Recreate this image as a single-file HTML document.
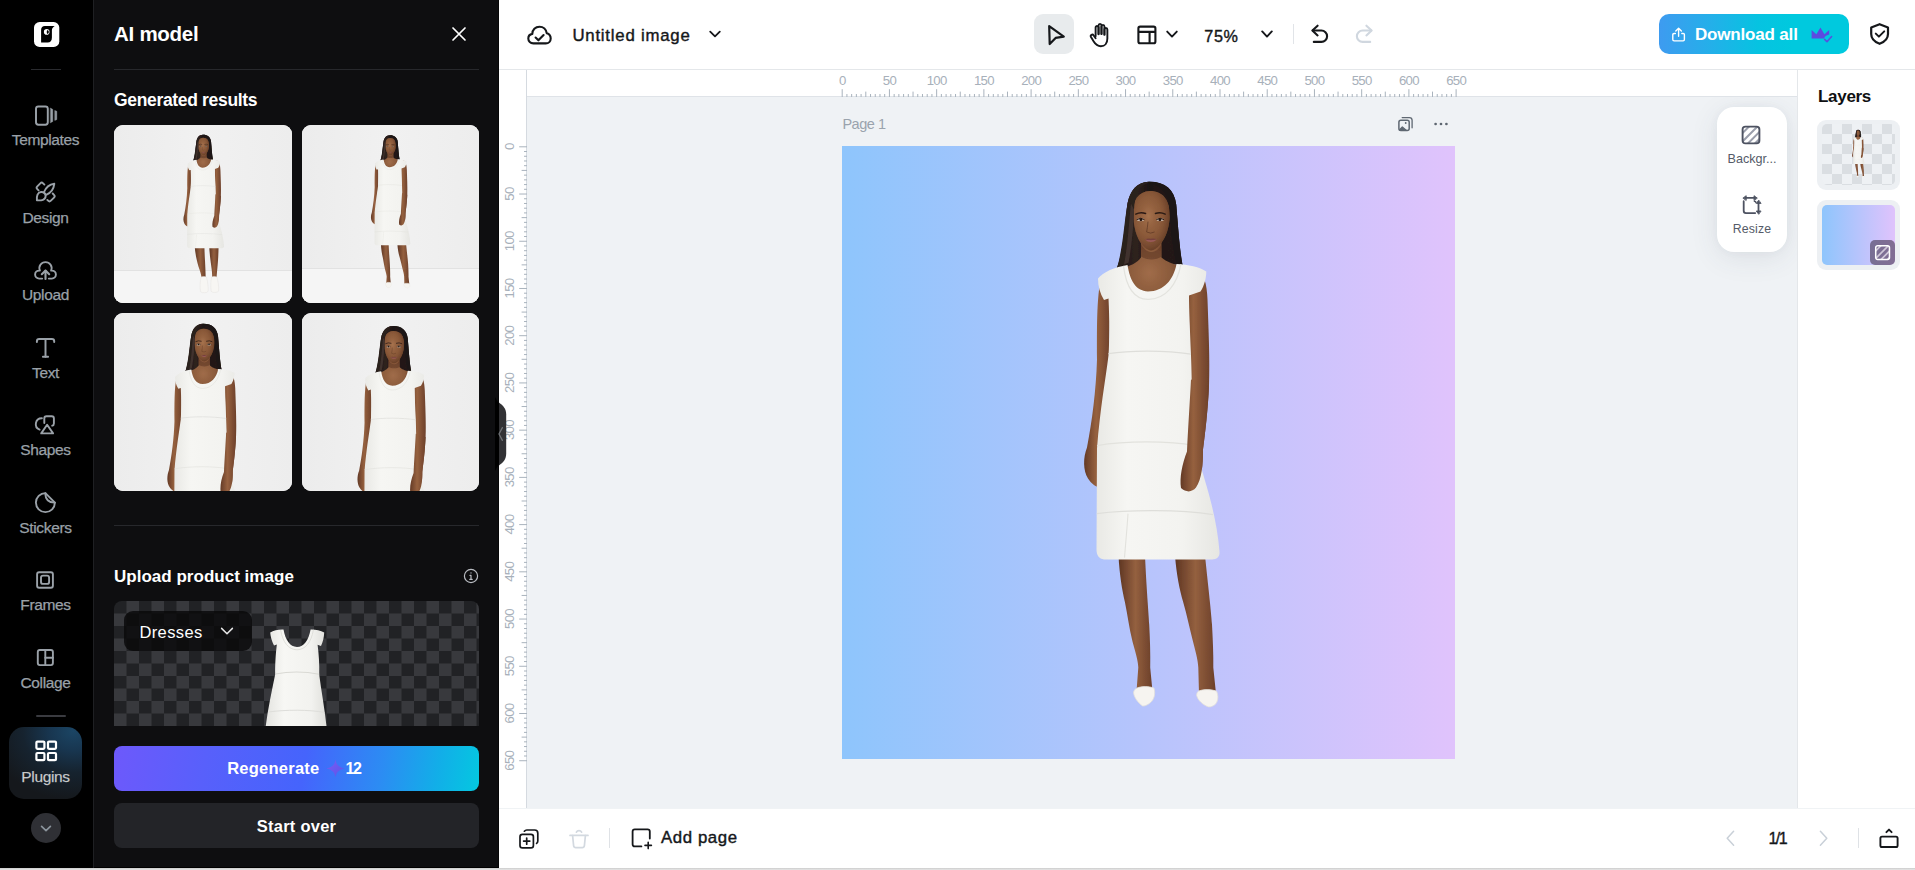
<!DOCTYPE html>
<html lang="en">
<head>
<meta charset="utf-8">
<title>Untitled image</title>
<style>
*{box-sizing:border-box;margin:0;padding:0}
html,body{width:1915px;height:870px;overflow:hidden;background:#fff;font-family:"Liberation Sans",sans-serif;}
body{position:relative}
.abs{position:absolute}
#nav{position:absolute;left:0;top:0;width:94px;height:868px;background:#000;border-right:1px solid #1f2023}
#panel{position:absolute;left:94px;top:0;width:405px;height:868px;background:#0e0e10;border-right:1px solid #070708;border-bottom:1px solid #000}
#top{position:absolute;left:499px;top:0;width:1416px;height:70px;background:#fff;border-bottom:1px solid #e4e7ea}
#stage{position:absolute;left:499px;top:70px;width:1298px;height:738.5px;background:#eff2f5}
#hr{position:absolute;left:499px;top:70px;width:1298px;height:27px;background:#fff;border-bottom:1px solid #dfe3e8}
#vr{position:absolute;left:499px;top:70px;width:28px;height:739px;background:#fff;border-right:1px solid #d5dae0}
#layers{position:absolute;left:1797px;top:70px;width:118px;height:739px;background:#fff;border-left:1px solid #e4e7ea}
#bottom{position:absolute;left:499px;top:809px;width:1416px;height:59px;background:#fff;box-shadow:0 -1px 0 #f0f3f5}
#edge{position:absolute;left:0;top:868px;width:1915px;height:2px;background:linear-gradient(#c6c6c6,#dcdcdc 45%,#e4e4e4)}
.navitem{position:absolute;left:0;width:93px;text-align:center;color:#9aa1a8;font-size:15px;letter-spacing:-0.2px}
.navitem svg{position:absolute;left:50%;transform:translateX(-50%)}
.nl{left:0;width:91px;text-align:center;font-size:15.5px;color:#9aa1a8;letter-spacing:-0.35px;-webkit-text-stroke:0.25px #9aa1a8}
.th{position:absolute;width:177.5px;height:177.5px;border-radius:9px;overflow:hidden;background:#f0f0f0}
.th svg{display:block}
.t{position:absolute;white-space:nowrap;line-height:1}
</style>
</head>
<body>


<svg width="0" height="0" style="position:absolute">
  <defs>
    <linearGradient id="skinL" x1="0" y1="0" x2="1" y2="0"><stop offset="0" stop-color="#643a26"/><stop offset="0.45" stop-color="#96613f"/><stop offset="1" stop-color="#6d402a"/></linearGradient>
    <linearGradient id="legG" x1="0" y1="0" x2="1" y2="0"><stop offset="0" stop-color="#5e3623"/><stop offset="0.5" stop-color="#94603f"/><stop offset="1" stop-color="#6b3f29"/></linearGradient>
    <linearGradient id="dressG" x1="0" y1="0" x2="1" y2="0"><stop offset="0" stop-color="#e9e9e5"/><stop offset="0.25" stop-color="#f6f6f3"/><stop offset="0.7" stop-color="#f3f3f0"/><stop offset="1" stop-color="#e6e6e2"/></linearGradient>
    <linearGradient id="hairG" x1="0" y1="0" x2="1" y2="0"><stop offset="0" stop-color="#1d1513"/><stop offset="0.3" stop-color="#3a2a26"/><stop offset="0.5" stop-color="#1a1210"/><stop offset="0.75" stop-color="#35262243"/><stop offset="1" stop-color="#1d1513"/></linearGradient>
    <radialGradient id="faceG" cx="0.42" cy="0.42" r="0.62"><stop offset="0" stop-color="#a8744f" stop-opacity="0.95"/><stop offset="0.55" stop-color="#8d5b3a" stop-opacity="0.5"/><stop offset="1" stop-color="#5a3421" stop-opacity="0.85"/></radialGradient>
    <radialGradient id="chestG" cx="0.45" cy="0.55" r="0.6"><stop offset="0" stop-color="#a06c49"/><stop offset="0.6" stop-color="#8a5a3b"/><stop offset="1" stop-color="#6e412a"/></radialGradient>
    <g id="figpre">
      <!-- hair back -->
      <path d="M1149 182.2 C1137 182.4 1130 191 1127.5 204 C1125 222 1124 244 1119.6 260 C1118.8 264 1117.6 267 1116.4 269.4 L1130 267 L1175 265 L1182.6 265.8 C1179.6 250 1178 226 1176.2 205 C1174.4 190 1165 182 1149 182.2 Z" fill="#1f1614"/>
      <path d="M1149 182.2 C1137 182.4 1130 191 1127.5 204 C1125 222 1124 244 1119.6 260 C1118.8 264 1117.6 267 1116.4 269.4 L1130 267 L1175 265 L1182.6 265.8 C1179.6 250 1178 226 1176.2 205 C1174.4 190 1165 182 1149 182.2 Z" fill="url(#hairG)" opacity="0.6"/>
      <!-- neck and chest -->
      <path d="M1141 238 L1141 258 C1137 263.5 1130 266.5 1122 269 L1128 302 L1178 302 L1183 267 C1175 265 1166 262.5 1161.5 258 L1161.5 238 Z" fill="url(#chestG)"/>
      <path d="M1141 245 C1147 255 1156 255 1161.5 245 L1161.5 257 C1156 261 1147 261 1141 257 Z" fill="#55301f" opacity="0.5"/>
      <!-- face -->
      <path d="M1133.2 214 C1132.8 201 1138 192 1150 191.5 C1163 191.5 1170 201 1169.7 216 C1169.4 228 1166 238 1160 245 C1157 248.6 1154 250.8 1151 250.8 C1148 250.8 1145 248.6 1142 245 C1136.5 238 1133.6 228 1133.2 214 Z" fill="#8a5939"/>
      <path d="M1133.2 214 C1132.8 201 1138 192 1150 191.5 C1163 191.5 1170 201 1169.7 216 C1169.4 228 1166 238 1160 245 C1157 248.6 1154 250.8 1151 250.8 C1148 250.8 1145 248.6 1142 245 C1136.5 238 1133.6 228 1133.2 214 Z" fill="url(#faceG)"/>
      <!-- hair front parts -->
      <path d="M1148.4 183.4 C1139 186 1134.6 196 1134 210 C1133.6 225 1132 245 1128.6 263 L1117 268.5 C1123 248 1124 224 1127.5 204 C1130 191 1137.5 182.6 1148.4 182.2 Z" fill="#2b201d"/>
      <path d="M1134 210 C1133.6 225 1132 245 1128.6 263 L1124 265 C1128 245 1129 222 1131 204 Z" fill="#4a3a35" opacity="0.7"/>
      <path d="M1148.4 183.4 C1160 185 1168.6 195 1169.6 210 C1170.4 228 1172 248 1176 263 L1182.4 265.6 C1179.5 250 1178 226 1176.2 205 C1174.4 190 1165 182 1148.4 182.2 Z" fill="#1e1513"/>
      <!-- features -->
      <ellipse cx="1140.6" cy="220.2" rx="3.6" ry="1.45" fill="#cdbfb4"/>
      <ellipse cx="1160.2" cy="220.2" rx="3.6" ry="1.45" fill="#cdbfb4"/>
      <circle cx="1140.9" cy="220.1" r="1.45" fill="#24150f"/>
      <circle cx="1159.9" cy="220.1" r="1.45" fill="#24150f"/>
      <path d="M1136.8 220 Q1140.6 217.4 1144.4 220" stroke="#1f130f" stroke-width="1" fill="none"/>
      <path d="M1156.4 220 Q1160.2 217.4 1164 220" stroke="#1f130f" stroke-width="1" fill="none"/>
      <path d="M1135.8 214.6 Q1140.4 212 1145.6 213.9" stroke="#2a1a15" stroke-width="1.4" fill="none" stroke-linecap="round"/>
      <path d="M1155.4 213.9 Q1160.6 212 1165.2 214.6" stroke="#2a1a15" stroke-width="1.4" fill="none" stroke-linecap="round"/>
      <path d="M1148 222 C1147.6 227 1147 230 1146.6 232.4 Q1150.6 234.6 1154.6 232.4" stroke="#5e3824" stroke-width="0.9" fill="none" opacity="0.8"/>
      <path d="M1144.8 240 Q1148 238.4 1150.8 239.2 Q1153.6 238.4 1157 240 Q1150.8 241.4 1144.8 240 Z" fill="#74403c"/>
      <path d="M1144.8 240 Q1150.8 241.4 1157 240 Q1150.8 245 1144.8 240 Z" fill="#99595a"/>
      <!-- arms -->
      <path d="M1101 279 C1096.5 298 1097 330 1097 360 C1096 392 1092 422 1087 448 C1083 458 1083 471 1088 479 C1092 485 1097 488.5 1100 487 C1100.5 478 1098 468 1098.5 455 C1101 430 1106 400 1108.5 370 L1111 290 Z" fill="url(#skinL)"/>
      <path d="M1195 268 C1204 272 1207 285 1207.5 300 C1208.5 330 1210 360 1209 386 C1208 410 1205 435 1203 450 C1203 465 1202 479 1196 488 C1192 493 1186 493 1181 488.5 C1179.5 478 1182 465 1187 452 C1188 430 1190 400 1191 380 L1188 290 Z" fill="url(#skinL)"/>
      </g>
    <g id="legsA"><!-- legs -->
      <path d="M1118.5 556 C1119.5 575 1122 590 1125 603 C1127.5 615 1129 628 1132.5 642 C1135.5 653 1138 661 1138.3 668 L1136.5 692 L1152.5 692 L1150.2 668 C1150.5 655 1150 640 1149.2 625 C1148.4 610 1146.5 590 1145 556 Z" fill="url(#legG)"/>
      <path d="M1175 556 C1176.5 575 1179.5 590 1183.3 603 C1187 616 1189.5 628 1192.5 640 C1195 650 1198 660 1198.3 668 L1199 694 L1216 694 L1213.3 668 C1213.5 655 1212.8 640 1212 625 C1211 610 1208.5 590 1205 556 Z" fill="url(#legG)"/>
      </g>
    <g id="figpost"><!-- dress -->
      <path d="M1127.5 265.5 C1115 267.5 1103 272.5 1098 279 C1098 287 1100 294 1104 300.5 L1108.5 299 C1109.5 320 1109.5 340 1108.5 356 C1105.5 380 1100 410 1097 449 L1096.5 550 C1096.5 556 1099 559.3 1104 559.8 L1212 559.8 C1217 559.5 1220 557 1219.5 552 C1218 530 1212 505 1207 488 L1193 440 C1192 410 1192 380 1191 356 C1190 330 1189 310 1189 296 L1200.5 292 C1204.5 286 1206.3 278 1206.3 272 C1200 267 1188 265 1176.5 264.3 C1173.5 280 1164 291.6 1148 291.8 C1135.5 291.5 1130 281 1127.5 265.5 Z" fill="url(#dressG)"/>
      <!-- neckline trim -->
      <path d="M1123.5 266.3 C1126 287 1134 299.6 1148 299.8 C1166 299.6 1177 285 1181 264.6" fill="none" stroke="#e3e3de" stroke-width="1.2"/>
      <!-- seams -->
      <path d="M1108.5 354 C1130 350.5 1165 350.5 1191 354.5" fill="none" stroke="#dededa" stroke-width="1.3"/>
      <path d="M1097 446 C1125 441 1170 441 1194 446" fill="none" stroke="#e2e2dd" stroke-width="1.2"/>
      <path d="M1096.8 514 C1130 510 1180 510 1213 515" fill="none" stroke="#dededa" stroke-width="1.3"/>
      <path d="M1128 514 C1127 530 1125.5 545 1124.5 558" fill="none" stroke="#e2e2dd" stroke-width="1.1"/>
      <!-- right arm over dress -->
      <path d="M1191 380 C1190 400 1188 430 1187 452 C1182 465 1179.5 478 1181 488.5 C1186 493 1192 493 1196 488 C1202 479 1203 465 1203 450 C1205 435 1208 410 1209 386 Z" fill="url(#skinL)"/>
    </g>
    <g id="legsB">
      <path d="M1121.5 552 C1123 575 1128 600 1134 620 C1139 635 1143 645 1144 655 L1143 664 L1159 664 L1158.2 655 C1158 640 1157 620 1156 600 C1155 585 1154.5 570 1154 552 Z" fill="url(#legG)"/>
      <path d="M1170 552 C1171 575 1174 600 1177 620 C1179 635 1180 645 1180 655 L1179 664 L1196 664 L1194.8 655 C1196 640 1198 620 1199.5 600 C1200.5 585 1201 570 1201.4 552 Z" fill="url(#legG)"/>
      <path d="M1143 656 C1147 653.5 1157 653.5 1161 656 C1165 670 1167.5 690 1166.5 704 C1162 710 1146 710 1141 705 C1138.5 690 1139.5 670 1143 656 Z" fill="#f7f6f3" stroke="#e3e2df" stroke-width="1.6"/>
      <path d="M1178 656 C1182 653.5 1192 653.5 1196 656 C1200 670 1202.5 690 1201.5 703 C1197 709 1181 709 1176.5 704 C1174.5 690 1175 670 1178 656 Z" fill="#f7f6f3" stroke="#e3e2df" stroke-width="1.6"/>
    </g>
    <g id="figbody"><use href="#figpre"/><use href="#legsA"/><use href="#figpost"/></g>
    <g id="figbodyB"><use href="#figpre"/><use href="#legsB"/><use href="#figpost"/></g>
    <g id="pumps">
      <path d="M1137 688.5 C1141 686.5 1149 686.5 1154 688.5 C1155.5 694 1154.5 699.5 1150.5 703 C1147.5 705.5 1144.6 706.8 1142.6 706.4 C1138 703 1133.6 697.5 1133.6 692.6 C1134 690.6 1135.3 689.3 1137 688.5 Z" fill="#f6f4f0" stroke="#e2dfda" stroke-width="0.8"/>
      <path d="M1198.5 691.5 C1203 689.5 1211 689.5 1216.5 691.5 C1218.6 696 1218.3 701 1215.6 704.5 C1213.5 706.5 1211 707.5 1208.6 707.3 C1203 705.5 1197.6 700.5 1196.6 695.6 C1196.8 693.6 1197.4 692.3 1198.5 691.5 Z" fill="#f6f4f0" stroke="#e2dfda" stroke-width="0.8"/>
    </g>
    <filter id="soft" x="-5%" y="-5%" width="110%" height="110%"><feGaussianBlur stdDeviation="0.45"/></filter>
    <linearGradient id="wallG" x1="0" y1="0" x2="1" y2="0"><stop offset="0" stop-color="#ececec"/><stop offset="0.5" stop-color="#f1f1f1"/><stop offset="1" stop-color="#ededed"/></linearGradient>
    <filter id="soft2" x="-5%" y="-5%" width="110%" height="110%"><feGaussianBlur stdDeviation="0.8"/></filter>
    
    <g id="fig"><use href="#figbody"/><use href="#pumps"/></g>
  </defs>
</svg>
<div id="nav">
  <!-- logo -->
  <svg class="abs" style="left:33.5px;top:22px" width="26" height="26" viewBox="0 0 26 26">
    <rect x="0" y="0" width="25.3" height="25" rx="5.6" fill="#fff"/>
    <path d="M7.1 20.6 V8 C7.1 5.6 8.6 4.1 10.8 4.1 H20.7 C18.8 5.2 17.9 6.6 17.9 8.6 V15.6 C17.9 18.8 16.4 20.6 13.6 20.6 Z" fill="#000"/>
    <circle cx="12.7" cy="9.9" r="2.8" fill="#fff"/>
    <path d="M13.3 7.9 A2.05 2.05 0 0 1 13.3 11.9 C12.6 10.6 12.6 9.2 13.3 7.9 Z" fill="#000"/>
  </svg>
  <div class="abs" style="left:31px;top:69px;width:30px;height:1px;background:#2a2b2f"></div>

  <!-- Templates -->
  <svg class="abs" style="left:33px;top:103px" width="26" height="24" viewBox="0 0 26 24" fill="none" stroke="#9aa1a8" stroke-width="1.95" stroke-linecap="round" stroke-linejoin="round">
    <rect x="3" y="3.4" width="11.8" height="18.3" rx="2.4"/>
    <path d="M17.6 5.3 L19.7 6.4 V18.5 L17.6 19.6 Z M22.1 7.7 L23.7 8.3 V16.6 L22.1 17.2 Z" fill="#9aa1a8" stroke-width="0.6"/>
  </svg>
  <div class="t nl" style="top:132px">Templates</div>

  <!-- Design -->
  <svg class="abs" style="left:33px;top:180px" width="26" height="24" viewBox="0 0 26 24" fill="none" stroke="#9aa1a8" stroke-width="1.9" stroke-linecap="round" stroke-linejoin="round">
    <path d="M21.3 3.8 C17 4.4 12.8 7.6 10.9 12.4 L13.2 14.8 C17.8 12.8 20.8 8.4 21.3 3.8 Z"/>
    <path d="M3.9 20.3 C3.5 16 4.6 12.2 8 12 C10.6 11.8 12.8 13.8 12.6 16.4 C12.4 19.8 8.6 20.7 3.9 20.3 Z"/>
    <path d="M5.6 10.4 L4.3 9.1 Q2.9 7.7 4.3 6.3 L7.3 3.3 Q8.7 1.9 10.1 3.3 L11.4 4.6"/>
    <path d="M19.7 13.5 L21 14.8 Q22.4 16.2 21 17.6 L17.9 20.7 Q16.5 22.1 15.1 20.7 L14.3 19.9"/>
  </svg>
  <div class="t nl" style="top:210px">Design</div>

  <!-- Upload -->
  <svg class="abs" style="left:33px;top:258px" width="26" height="24" viewBox="0 0 26 24" fill="none" stroke="#9aa1a8" stroke-width="1.9" stroke-linecap="round" stroke-linejoin="round">
    <path d="M9.2 20.6 H6.1 A4 4 0 0 1 6.1 12.6 H6.9 A6.1 6.1 0 1 1 18.1 12.6 H18.9 A4 4 0 0 1 18.9 20.6 H15.8"/>
    <path d="M12.5 21 V12.8" stroke-width="2.1"/><path d="M8.8 16.2 L12.5 12.5 L16.2 16.2" stroke-width="2.1"/>
  </svg>
  <div class="t nl" style="top:287px">Upload</div>

  <!-- Text -->
  <svg class="abs" style="left:33px;top:335px" width="26" height="24" viewBox="0 0 26 24" fill="none" stroke="#9aa1a8" stroke-width="1.95" stroke-linecap="round" stroke-linejoin="round">
    <path d="M3.9 7 V6.2 C3.9 4.7 4.7 3.9 6.2 3.9 H18.9 C20.4 3.9 21.2 4.7 21.2 6.2 V7"/><path d="M12.5 3.9 V21.8"/><path d="M9.9 21.8 H15.1"/>
  </svg>
  <div class="t nl" style="top:365px">Text</div>

  <!-- Shapes -->
  <svg class="abs" style="left:33px;top:413px" width="26" height="24" viewBox="0 0 26 24" fill="none" stroke="#9aa1a8" stroke-width="1.9" stroke-linecap="round" stroke-linejoin="round">
    <path d="M11.3 10 V5.4 C11.3 4 12.1 3.2 13.5 3.2 H18.7 C20.1 3.2 20.9 4 20.9 5.4 V10.4 C20.9 11.6 20.3 12.4 19.2 12.7"/>
    <path d="M8.9 5.2 A5.9 5.9 0 0 0 6.6 16.6"/>
    <path d="M14.1 11.8 L20.1 20.4 H8.2 Z"/>
  </svg>
  <div class="t nl" style="top:442px">Shapes</div>

  <!-- Stickers -->
  <svg class="abs" style="left:33px;top:490px" width="26" height="24" viewBox="0 0 26 24" fill="none" stroke="#9aa1a8" stroke-width="1.9" stroke-linecap="round" stroke-linejoin="round">
    <path d="M12.4 3.1 A9.5 9.5 0 1 0 21.9 12.6 L12.4 3.1 Z"/>
    <path d="M12.4 3.1 C12.2 9.4 15.6 12.8 21.9 12.6"/>
  </svg>
  <div class="t nl" style="top:520px">Stickers</div>

  <!-- Frames -->
  <svg class="abs" style="left:33px;top:568px" width="26" height="24" viewBox="0 0 26 24" fill="none" stroke="#9aa1a8" stroke-width="1.9" stroke-linecap="round" stroke-linejoin="round">
    <rect x="4.1" y="4.3" width="15.8" height="15.5" rx="2"/>
    <rect x="8" y="7.6" width="8.1" height="8.3" rx="2"/>
  </svg>
  <div class="t nl" style="top:597px">Frames</div>

  <!-- Collage -->
  <svg class="abs" style="left:33px;top:645px" width="26" height="24" viewBox="0 0 26 24" fill="none" stroke="#9aa1a8" stroke-width="1.9" stroke-linecap="round" stroke-linejoin="round">
    <rect x="4.8" y="5" width="15.1" height="15.1" rx="2"/>
    <path d="M12.3 5 V20.1"/><path d="M12.3 12.8 H19.9"/>
  </svg>
  <div class="t nl" style="top:675px">Collage</div>

  <div class="abs" style="left:36px;top:715px;width:30px;height:2px;background:#3a3b40;border-radius:1px"></div>

  <!-- Plugins active -->
  <div class="abs" style="left:9px;top:727px;width:73px;height:72px;border-radius:15px;background:radial-gradient(115% 95% at 88% 6%,#1b4564 0%,#183650 28%,#16232f 60%,#15181c 100%)"></div>
  <svg class="abs" style="left:33px;top:739px" width="26" height="24" viewBox="0 0 26 24" fill="none" stroke="#fff" stroke-width="2.2" stroke-linejoin="round">
    <rect x="3.4" y="2.6" width="8" height="7.2" rx="1"/>
    <rect x="15" y="2.6" width="8" height="7.2" rx="1"/>
    <rect x="3.4" y="14" width="8" height="7.2" rx="1"/>
    <rect x="15" y="14" width="8" height="7.2" rx="1"/>
  </svg>
  <div class="t nl" style="top:769px;color:#d6d6d6">Plugins</div>

  <div class="abs" style="left:31.2px;top:813px;width:30px;height:30px;border-radius:50%;background:#2f3035"></div>
  <svg class="abs" style="left:31.2px;top:813px" width="30" height="30" viewBox="0 0 30 30" fill="none" stroke="#8b949c" stroke-width="1.7" stroke-linecap="round" stroke-linejoin="round"><path d="M10.6 13.4 L15 17.6 L19.4 13.4"/></svg>
</div>


<div id="panel">
  <div class="t" style="left:20px;top:23.8px;font-size:20.5px;font-weight:700;color:#fff;letter-spacing:-0.27px">AI model</div>
  <svg class="abs" style="left:355px;top:24px" width="20" height="20" viewBox="0 0 20 20" fill="none" stroke="#fff" stroke-width="1.7" stroke-linecap="round"><path d="M4 4 L16 16 M16 4 L4 16"/></svg>
  <div class="abs" style="left:20px;top:69px;width:365px;height:1px;background:#27282c"></div>
  <div class="t" style="left:20px;top:91.6px;font-size:17.5px;font-weight:700;color:#fff;letter-spacing:-0.33px">Generated results</div>

  <div class="th" style="left:20px;top:125px"><svg width="178" height="178" viewBox="0 0 178 178"><rect width="178" height="178" fill="url(#wallG)"/><rect x="0" y="145.5" width="178" height="32.5" fill="#f5f5f5"/><rect x="0" y="145.0" width="178" height="1" fill="#e2e2e2"/><g transform="translate(-255.82000000000002 -44.8) scale(0.3)" filter="url(#soft2)"><use href="#figbodyB"/></g></svg></div>
  <div class="th" style="left:207.5px;top:125px"><svg width="178" height="178" viewBox="0 0 178 178"><rect width="178" height="178" fill="url(#wallG)"/><rect x="0" y="143.5" width="178" height="34.5" fill="#f5f5f5"/><rect x="0" y="143.0" width="178" height="1" fill="#e2e2e2"/><g transform="translate(-246.54840000000002 -42.661999999999985) scale(0.291)" filter="url(#soft2)"><use href="#figbody"/><use href="#pumps"/></g></svg></div>
  <div class="th" style="left:20px;top:313px"><svg width="178" height="178" viewBox="0 0 178 178"><rect width="178" height="178" fill="url(#wallG)"/><g transform="translate(-542.88 -89.48) scale(0.55)" filter="url(#soft2)"><use href="#figbody"/><use href="#pumps"/></g></svg></div>
  <div class="th" style="left:207.5px;top:313px"><svg width="178" height="178" viewBox="0 0 178 178"><rect width="178" height="178" fill="url(#wallG)"/><g transform="translate(-535.32 -86.36) scale(0.545)" filter="url(#soft2)"><use href="#figbody"/><use href="#pumps"/></g></svg></div>

  <div class="abs" style="left:20px;top:525px;width:365px;height:1px;background:#27282c"></div>
  <div class="t" style="left:20px;top:567.7px;font-size:17px;font-weight:700;color:#fff;letter-spacing:0.02px">Upload product image</div>
  <svg class="abs" style="left:368.6px;top:567.8px" width="16" height="16" viewBox="0 0 16 16" fill="none" stroke="#b9bcc2" stroke-width="1.2" stroke-linecap="round"><circle cx="8" cy="8" r="6.6"/><path d="M8 7.4 V11.4 M6.8 11.4 H9.2 M7 7.4 H8"/><circle cx="8" cy="4.9" r="0.7" fill="#b9bcc2" stroke="none"/></svg>

  <div class="abs" id="up" style="left:20px;top:601px;width:365px;height:125px;overflow:hidden;border-radius:8px 8px 0 0">
    <svg class="abs" style="left:0;top:0" width="365" height="125" viewBox="114 601 365 125">
      <defs><pattern id="chk" x="114" y="601" width="25" height="25" patternUnits="userSpaceOnUse"><rect width="25" height="25" fill="#212225"/><rect x="12.5" y="0" width="12.5" height="12.5" fill="#38393d"/><rect x="0" y="12.5" width="12.5" height="12.5" fill="#38393d"/></pattern>
      <linearGradient id="dr2" x1="0" y1="0" x2="1" y2="0"><stop offset="0" stop-color="#e4e4e0"/><stop offset="0.3" stop-color="#f7f7f4"/><stop offset="0.75" stop-color="#f2f2ef"/><stop offset="1" stop-color="#dfdfdb"/></linearGradient></defs>
      <rect x="114" y="601" width="365" height="125" fill="url(#chk)"/>
      <g filter="url(#soft)">
      <path d="M283.5 629.5 C279 629.2 273.5 630.5 270.2 632.6 C270.6 637 271.8 641.5 274 645.6 L276.8 644.6 C275.6 655 275 666 275.2 674.2 C272 690 268 708 265.6 727 L326.6 727 C324.6 708 321.2 690 319.2 674.4 C319.6 665 318.8 654 317.6 644.8 L321 646 C323 641.6 324 637 324.2 632.4 C320.6 630.4 315 629.2 310.6 629.4 C308.6 640 304 646.8 297 647 C290 646.8 285.4 640 283.5 629.5 Z" fill="url(#dr2)"/>
      <path d="M280.6 630 C282.8 642.6 288.6 649.6 297 649.8 C305.4 649.6 311.2 642.6 313.4 629.8" fill="none" stroke="#dcdcd7" stroke-width="0.9"/>
      <path d="M275.2 674 C288 671.6 306 671.6 319.2 674.2" fill="none" stroke="#d9d9d4" stroke-width="1.1"/>
      <path d="M268.4 712 C285 709.6 310 709.6 324.4 712.4" fill="none" stroke="#dededa" stroke-width="1"/>
      </g>
    </svg>
  </div>
  <div class="abs" style="left:30px;top:611px;width:128px;height:40px;border-radius:9px;background:rgba(8,8,10,0.82)"></div>
  <div class="t" style="left:45.4px;top:623.5px;font-size:16.5px;color:#fff;letter-spacing:0.4px">Dresses</div>
  <svg class="abs" style="left:124px;top:622px" width="18" height="18" viewBox="0 0 18 18" fill="none" stroke="#e6e6e6" stroke-width="1.5" stroke-linecap="round" stroke-linejoin="round"><path d="M3.6 6.4 L9 11.8 L14.4 6.4"/></svg>

  <div class="abs" style="left:20px;top:746px;width:365px;height:45px;border-radius:8px;background:linear-gradient(100deg,#6d59fb 0%,#5860fb 25%,#4564fc 52%,#2c8cf3 73%,#12aee8 88%,#04c8e0 100%)"></div>
  <div class="t" style="left:133.2px;top:759.7px;font-size:16.5px;font-weight:700;color:#fff;letter-spacing:0.24px">Regenerate</div>
  <svg class="abs" style="left:231px;top:758px" width="21" height="21" viewBox="0 0 18 18"><defs><linearGradient id="sp" x1="0" y1="0" x2="1" y2="1"><stop offset="0" stop-color="#7a5cf5"/><stop offset="1" stop-color="#5a55e8"/></linearGradient></defs><path d="M9 1.2 C9.6 5.6 11.4 7.8 16.8 9 C11.4 10.2 9.6 12.4 9 16.8 C8.4 12.4 6.6 10.2 1.2 9 C6.6 7.8 8.4 5.6 9 1.2 Z" fill="url(#sp)"/></svg>
  <div class="t" style="left:251.4px;top:760.9px;font-size:16px;font-weight:700;color:#fff;letter-spacing:-1.3px">12</div>

  <div class="abs" style="left:20px;top:803px;width:365px;height:45px;border-radius:8px;background:#232428"></div>
  <div class="t" style="left:20px;width:365px;text-align:center;top:817.8px;font-size:16.5px;font-weight:700;color:#fff;letter-spacing:0.24px">Start over</div>

  
</div>


<div id="top">
  <!-- cloud -->
  <svg class="abs" style="left:27px;top:22.5px" width="28" height="26" viewBox="0 0 28 26" fill="none" stroke="#15171a" stroke-width="2.1" stroke-linecap="round" stroke-linejoin="round">
    <path d="M7.4 20.4 C4.4 20.4 2.3 18.4 2.3 15.6 C2.3 13.2 3.9 11.3 6.3 10.9 C6.3 6.9 9.4 3.7 13.5 3.7 C17.3 3.7 20.3 6.4 20.7 10.2 C23.1 10.8 24.7 12.8 24.7 15.4 C24.7 18.2 22.6 20.4 19.8 20.4 Z"/>
    <path d="M9.6 14.6 L12.4 17.3 L17.6 12"/>
  </svg>
  <div class="t" style="left:73.4px;top:28.1px;font-size:16.8px;color:#15171a;letter-spacing:0.78px;-webkit-text-stroke:0.4px #15171a">Untitled image</div>
  <svg class="abs" style="left:207px;top:25px" width="18" height="18" viewBox="0 0 18 18" fill="none" stroke="#15171a" stroke-width="1.8" stroke-linecap="round" stroke-linejoin="round"><path d="M4.2 6.6 L9 11.4 L13.8 6.6"/></svg>

  <div class="abs" style="left:535px;top:14px;width:40px;height:40px;border-radius:9px;background:#e8ebed"></div>
  <svg class="abs" style="left:543px;top:22px" width="26" height="26" viewBox="0 0 26 26" fill="none" stroke="#15171a" stroke-width="2.2" stroke-linecap="round" stroke-linejoin="round">
    <path d="M7.2 4.2 L21.8 14.6 L13.6 15.9 L7.7 22 Z"/>
  </svg>
  <!-- hand -->
  <svg class="abs" style="left:587.6px;top:21px" width="27.3" height="29.4" viewBox="0 0 26 28" fill="none" stroke="#15171a" stroke-width="1.8" stroke-linecap="round" stroke-linejoin="round">
    <path d="M8.2 14.6 V6.2 C8.2 4.2 11 4.2 11 6.2 V12.6"/>
    <path d="M11 12.4 V4.2 C11 2.2 13.8 2.2 13.8 4.2 V12.4"/>
    <path d="M13.8 12.4 V5.2 C13.8 3.2 16.6 3.2 16.6 5.2 V13"/>
    <path d="M16.6 13 V8.2 C16.6 6.2 19.4 6.2 19.4 8.2 V16.6 C19.4 21.4 17 24 13.2 24 C10 24 8.2 22.6 6.4 19.6 L3.8 15.2 C2.8 13.4 5.2 12 6.4 13.8 L8.2 16.4"/>
  </svg>
  <!-- layout -->
  <svg class="abs" style="left:635.6px;top:23px" width="24" height="24" viewBox="0 0 24 24" fill="none" stroke="#15171a" stroke-width="2.1" stroke-linejoin="round">
    <rect x="3.4" y="3.6" width="17" height="16.6" rx="1.8"/><path d="M3.4 8.9 H20.4 M14.6 8.9 V20.2"/>
  </svg>
  <svg class="abs" style="left:664.5px;top:26px" width="16" height="16" viewBox="0 0 16 16" fill="none" stroke="#15171a" stroke-width="1.9" stroke-linecap="round" stroke-linejoin="round"><path d="M3.2 5.6 L8 10.6 L12.8 5.6"/></svg>

  <div class="t" style="left:705.2px;top:27.9px;font-size:16.2px;color:#15171a;letter-spacing:0.7px;-webkit-text-stroke:0.4px #15171a">75%</div>
  <svg class="abs" style="left:759.6px;top:26px" width="16" height="16" viewBox="0 0 16 16" fill="none" stroke="#15171a" stroke-width="1.9" stroke-linecap="round" stroke-linejoin="round"><path d="M3.2 5.4 L8 10.6 L12.8 5.4"/></svg>
  <div class="abs" style="left:793.6px;top:24px;width:1.6px;height:20px;background:#e1e4e8"></div>
  <!-- undo -->
  <svg class="abs" style="left:808px;top:22px" width="26" height="26" viewBox="0 0 26 26" fill="none" stroke="#15171a" stroke-width="2.1" stroke-linecap="round" stroke-linejoin="round">
    <path d="M10.6 3.7 L5.4 8.5 L10.6 13.4"/><path d="M5.8 8.5 H14.4 A5.7 5.7 0 0 1 14.4 19.9 H6.8"/>
  </svg>
  <svg class="abs" style="left:852px;top:22px" width="26" height="26" viewBox="0 0 26 26" fill="none" stroke="#d0d7df" stroke-width="2.1" stroke-linecap="round" stroke-linejoin="round">
    <path d="M15.4 3.7 L20.6 8.5 L15.4 13.4"/><path d="M20.2 8.5 H11.6 A5.7 5.7 0 0 0 11.6 19.9 H19.2"/>
  </svg>

  <!-- download -->
  <div class="abs" style="left:1160px;top:14px;width:190.4px;height:39.8px;border-radius:10px;background:linear-gradient(90deg,#3e9bf0 0%,#23b0e9 28%,#06c3e1 52%,#00c9de 70%,#00c9de 100%)"></div>
  <svg class="abs" style="left:1171.4px;top:25.6px" width="17.2" height="17.2" viewBox="0 0 16 16" fill="none" stroke="#fff" stroke-width="1.3" stroke-linecap="round" stroke-linejoin="round"><path d="M8 9.6 V2.2 M5.4 4.6 L8 2 L10.6 4.6"/><path d="M5 7 H3.8 C3 7 2.6 7.4 2.6 8.2 V12.6 C2.6 13.4 3 13.8 3.8 13.8 H12.2 C13 13.8 13.4 13.4 13.4 12.6 V8.2 C13.4 7.4 13 7 12.2 7 H11"/></svg>
  <div class="t" style="left:1196px;top:25.9px;font-size:17px;font-weight:700;color:#fff;letter-spacing:-0.18px">Download all</div>
  <svg class="abs" style="left:1311.4px;top:24.6px" width="24" height="22" viewBox="0 0 24 22">
    <path d="M1.6 13.6 V5 L6.4 9.2 L10.4 2.4 L14.4 9.2 L19.2 5 V9.4 C16.4 10 14.6 11.6 14 13.6 Z" fill="#5b4be0"/>
    <path d="M14.6 14.4 L17 16.8 L21.6 11.6" fill="none" stroke="#5b4be0" stroke-width="1.5" stroke-linecap="round" stroke-linejoin="round"/>
  </svg>
  <!-- shield -->
  <svg class="abs" style="left:1368px;top:21px" width="26" height="28" viewBox="0 0 26 28" fill="none" stroke="#15171a" stroke-width="2.2" stroke-linecap="round" stroke-linejoin="round">
    <path d="M12.6 3.2 L21 6.6 V13 C21 17.8 17.4 21 12.6 22.8 C7.8 21 4.2 17.8 4.2 13 V6.6 Z"/>
    <path d="M8.8 12.6 L11.9 15.6 L17.2 10.4" stroke-width="2"/>
  </svg>
</div>


<div id="stage">
  <div class="t" style="left:343.4px;top:46.9px;font-size:14.5px;color:#9aa3ad;letter-spacing:-0.45px">Page 1</div>
  <!-- page icons -->
  <svg class="abs" style="left:897px;top:45px" width="18" height="18" viewBox="0 0 18 18" fill="none" stroke="#5f6872" stroke-width="1.5" stroke-linecap="round" stroke-linejoin="round">
    <path d="M6.2 2.6 H13.4 C15.2 2.6 16.1 3.5 16.1 5.3 V12.8" stroke-width="1.3"/>
    <rect x="2.9" y="5.2" width="10.3" height="10.2" rx="2"/>
    <circle cx="9.7" cy="8" r="0.9" fill="#5f6872" stroke="none"/>
    <path d="M3.4 15 L6.3 11.9 L10.2 15.3" fill="#5f6872" stroke-width="1.2"/>
  </svg>
  <svg class="abs" style="left:933px;top:45px" width="18" height="18" viewBox="0 0 18 18" fill="#5d6670"><circle cx="3.6" cy="9" r="1.35"/><circle cx="9" cy="9" r="1.35"/><circle cx="14.4" cy="9" r="1.35"/></svg>

  <div id="canvas" class="abs" style="left:343px;top:76.4px;width:612.5px;height:612.6px;background:linear-gradient(90deg,#8ec5fc 0%,#e0c3fc 100%);overflow:hidden">
    <svg class="abs" style="left:0;top:0" width="612.5" height="612.6" viewBox="842 146.4 612.5 612.6"><g filter="url(#soft)"><use href="#fig"/></g></svg>
  </div>

  <!-- floating tools -->
  <div class="abs" style="left:1218px;top:37px;width:70px;height:145.4px;border-radius:17px;background:#fff;box-shadow:0 6px 28px rgba(60,70,90,0.10),0 0 10px rgba(60,70,90,0.04)"></div>
  <svg class="abs" style="left:1241.4px;top:53.5px" width="22" height="22" viewBox="0 0 22 22" fill="none" stroke="#4d5261" stroke-width="1.9" stroke-linecap="round" stroke-linejoin="round">
    <defs><clipPath id="bgc"><rect x="2.6" y="2.6" width="16.8" height="16.8" rx="2.6"/></clipPath></defs>
    <g clip-path="url(#bgc)" stroke="#9a9eab" stroke-width="2"><path d="M-2 13.6 L13.6 -2 M0 20 L20 0 M5.4 22 L22 5.4 M11.4 23 L23 11.4"/></g>
    <rect x="2.6" y="2.6" width="16.8" height="16.8" rx="2.8"/>
  </svg>
  <div class="t" style="left:1218px;width:70px;text-align:center;top:83px;font-size:12.6px;color:#555b68;letter-spacing:0px">Backgr...</div>
  <svg class="abs" style="left:1241px;top:124px" width="22" height="22" viewBox="0 0 22 22" fill="none" stroke="#4d5261" stroke-width="1.8" stroke-linecap="round" stroke-linejoin="round">
    <path d="M3.7 7.2 V16.8 C3.7 18.4 4.4 19.1 5.9 19.1 H15.2"/>
    <path d="M5.6 3.9 H14.6"/><path d="M18.5 9.2 V17.2"/>
    <path d="M3.2 3.9 L6.2 1.7 V6.1 Z M17 3.9 L14 1.7 V6.1 Z M18.5 6.4 L16.3 9.4 H20.7 Z M18.5 20 L16.3 17 H20.7 Z" fill="#4d5261" stroke-width="0.9"/>
    <path d="M14.4 7.2 C15.4 7.2 15.9 7.7 15.9 8.6" stroke-width="1.5"/>
  </svg>
  <div class="t" style="left:1218px;width:70px;text-align:center;top:153px;font-size:12.3px;color:#555b68;letter-spacing:0.15px">Resize</div>
</div>

<div id="hr"><svg class="abs" style="left:0;top:0" width="1299" height="27" viewBox="0 0 1299 27"><path d="M343.20 19.2V27M347.92 24V27M352.65 24V27M357.37 24V27M362.09 24V27M366.81 21.6V27M371.54 24V27M376.26 24V27M380.98 24V27M385.70 24V27M390.43 19.2V27M395.15 24V27M399.87 24V27M404.59 24V27M409.32 24V27M414.04 21.6V27M418.76 24V27M423.48 24V27M428.21 24V27M432.93 24V27M437.65 19.2V27M442.37 24V27M447.10 24V27M451.82 24V27M456.54 24V27M461.26 21.6V27M465.99 24V27M470.71 24V27M475.43 24V27M480.15 24V27M484.88 19.2V27M489.60 24V27M494.32 24V27M499.04 24V27M503.77 24V27M508.49 21.6V27M513.21 24V27M517.93 24V27M522.66 24V27M527.38 24V27M532.10 19.2V27M536.82 24V27M541.55 24V27M546.27 24V27M550.99 24V27M555.71 21.6V27M560.44 24V27M565.16 24V27M569.88 24V27M574.60 24V27M579.33 19.2V27M584.05 24V27M588.77 24V27M593.49 24V27M598.22 24V27M602.94 21.6V27M607.66 24V27M612.38 24V27M617.11 24V27M621.83 24V27M626.55 19.2V27M631.27 24V27M636.00 24V27M640.72 24V27M645.44 24V27M650.16 21.6V27M654.88 24V27M659.61 24V27M664.33 24V27M669.05 24V27M673.78 19.2V27M678.50 24V27M683.22 24V27M687.94 24V27M692.66 24V27M697.39 21.6V27M702.11 24V27M706.83 24V27M711.56 24V27M716.28 24V27M721.00 19.2V27M725.72 24V27M730.45 24V27M735.17 24V27M739.89 24V27M744.61 21.6V27M749.34 24V27M754.06 24V27M758.78 24V27M763.50 24V27M768.23 19.2V27M772.95 24V27M777.67 24V27M782.39 24V27M787.12 24V27M791.84 21.6V27M796.56 24V27M801.28 24V27M806.01 24V27M810.73 24V27M815.45 19.2V27M820.17 24V27M824.89 24V27M829.62 24V27M834.34 24V27M839.06 21.6V27M843.79 24V27M848.51 24V27M853.23 24V27M857.95 24V27M862.68 19.2V27M867.40 24V27M872.12 24V27M876.84 24V27M881.57 24V27M886.29 21.6V27M891.01 24V27M895.73 24V27M900.46 24V27M905.18 24V27M909.90 19.2V27M914.62 24V27M919.35 24V27M924.07 24V27M928.79 24V27M933.51 21.6V27M938.24 24V27M942.96 24V27M947.68 24V27M952.40 24V27M957.12 19.2V27" stroke="#a9b3bd" stroke-width="1" fill="none"/><g font-family="Liberation Sans, sans-serif" font-size="13.2" fill="#a7b0ba" letter-spacing="-0.7"><text x="343.20" y="14.6" text-anchor="middle">0</text><text x="390.43" y="14.6" text-anchor="middle">50</text><text x="437.65" y="14.6" text-anchor="middle">100</text><text x="484.88" y="14.6" text-anchor="middle">150</text><text x="532.10" y="14.6" text-anchor="middle">200</text><text x="579.33" y="14.6" text-anchor="middle">250</text><text x="626.55" y="14.6" text-anchor="middle">300</text><text x="673.78" y="14.6" text-anchor="middle">350</text><text x="721.00" y="14.6" text-anchor="middle">400</text><text x="768.23" y="14.6" text-anchor="middle">450</text><text x="815.45" y="14.6" text-anchor="middle">500</text><text x="862.68" y="14.6" text-anchor="middle">550</text><text x="909.90" y="14.6" text-anchor="middle">600</text><text x="957.12" y="14.6" text-anchor="middle">650</text></g></svg></div>
<div id="vr"><svg class="abs" style="left:0;top:0" width="28" height="738" viewBox="0 0 28 738"><path d="M20.2 76.80H28M25 81.52H28M25 86.25H28M25 90.97H28M25 95.69H28M22.6 100.41H28M25 105.14H28M25 109.86H28M25 114.58H28M25 119.30H28M20.2 124.03H28M25 128.75H28M25 133.47H28M25 138.19H28M25 142.92H28M22.6 147.64H28M25 152.36H28M25 157.08H28M25 161.81H28M25 166.53H28M20.2 171.25H28M25 175.97H28M25 180.69H28M25 185.42H28M25 190.14H28M22.6 194.86H28M25 199.59H28M25 204.31H28M25 209.03H28M25 213.75H28M20.2 218.48H28M25 223.20H28M25 227.92H28M25 232.64H28M25 237.37H28M22.6 242.09H28M25 246.81H28M25 251.53H28M25 256.25H28M25 260.98H28M20.2 265.70H28M25 270.42H28M25 275.14H28M25 279.87H28M25 284.59H28M22.6 289.31H28M25 294.04H28M25 298.76H28M25 303.48H28M25 308.20H28M20.2 312.93H28M25 317.65H28M25 322.37H28M25 327.09H28M25 331.82H28M22.6 336.54H28M25 341.26H28M25 345.98H28M25 350.71H28M25 355.43H28M20.2 360.15H28M25 364.87H28M25 369.60H28M25 374.32H28M25 379.04H28M22.6 383.76H28M25 388.49H28M25 393.21H28M25 397.93H28M25 402.65H28M20.2 407.38H28M25 412.10H28M25 416.82H28M25 421.54H28M25 426.26H28M22.6 430.99H28M25 435.71H28M25 440.43H28M25 445.16H28M25 449.88H28M20.2 454.60H28M25 459.32H28M25 464.05H28M25 468.77H28M25 473.49H28M22.6 478.21H28M25 482.94H28M25 487.66H28M25 492.38H28M25 497.10H28M20.2 501.82H28M25 506.55H28M25 511.27H28M25 515.99H28M25 520.72H28M22.6 525.44H28M25 530.16H28M25 534.88H28M25 539.61H28M25 544.33H28M20.2 549.05H28M25 553.77H28M25 558.50H28M25 563.22H28M25 567.94H28M22.6 572.66H28M25 577.38H28M25 582.11H28M25 586.83H28M25 591.55H28M20.2 596.28H28M25 601.00H28M25 605.72H28M25 610.44H28M25 615.16H28M22.6 619.89H28M25 624.61H28M25 629.33H28M25 634.06H28M25 638.78H28M20.2 643.50H28M25 648.22H28M25 652.94H28M25 657.67H28M25 662.39H28M22.6 667.11H28M25 671.84H28M25 676.56H28M25 681.28H28M25 686.00H28M20.2 690.72H28" stroke="#a9b3bd" stroke-width="1" fill="none"/><g font-family="Liberation Sans, sans-serif" font-size="13.2" fill="#a7b0ba" letter-spacing="-0.7"><text transform="translate(15.4 76.80) rotate(-90)" text-anchor="middle">0</text><text transform="translate(15.4 124.03) rotate(-90)" text-anchor="middle">50</text><text transform="translate(15.4 171.25) rotate(-90)" text-anchor="middle">100</text><text transform="translate(15.4 218.48) rotate(-90)" text-anchor="middle">150</text><text transform="translate(15.4 265.70) rotate(-90)" text-anchor="middle">200</text><text transform="translate(15.4 312.93) rotate(-90)" text-anchor="middle">250</text><text transform="translate(15.4 360.15) rotate(-90)" text-anchor="middle">300</text><text transform="translate(15.4 407.38) rotate(-90)" text-anchor="middle">350</text><text transform="translate(15.4 454.60) rotate(-90)" text-anchor="middle">400</text><text transform="translate(15.4 501.82) rotate(-90)" text-anchor="middle">450</text><text transform="translate(15.4 549.05) rotate(-90)" text-anchor="middle">500</text><text transform="translate(15.4 596.28) rotate(-90)" text-anchor="middle">550</text><text transform="translate(15.4 643.50) rotate(-90)" text-anchor="middle">600</text><text transform="translate(15.4 690.72) rotate(-90)" text-anchor="middle">650</text></g></svg><div class="abs" style="left:0;top:0;width:27px;height:26px;background:#fff"></div></div>
<div id="layers">
  <div class="t" style="left:20px;top:17.6px;font-size:17px;font-weight:700;color:#0f1012;letter-spacing:-0.3px">Layers</div>
  <div class="abs" style="left:19px;top:50px;width:83px;height:70px;border-radius:9px;background:#edf0f3"></div>
  <div class="abs" id="lt1" style="left:24px;top:54px;width:73px;height:60.6px;border-radius:5px;overflow:hidden;background-color:#eef1f4;background-image:conic-gradient(#dadee2 25%,transparent 0 50%,#dadee2 0 75%,transparent 0);background-size:20px 20px;background-position:10px 0px"><svg class="abs" style="left:0;top:0" width="73" height="61" viewBox="0 0 73 61"><g transform="translate(-68.57 -10.86) scale(0.0910)" filter="url(#soft2)"><use href="#fig"/></g></svg></div>
  <div class="abs" style="left:19px;top:130px;width:83px;height:70px;border-radius:9px;background:#edf0f3"></div>
  <div class="abs" style="left:24px;top:135px;width:73px;height:60px;border-radius:5px;background:linear-gradient(90deg,#8ec5fc 0%,#e0c3fc 100%)"></div>
  <div class="abs" style="left:72px;top:170px;width:25px;height:25px;border-radius:5px;background:rgba(72,58,84,0.62)"></div>
  <svg class="abs" style="left:76.4px;top:174.4px" width="17.2" height="17.2" viewBox="0 0 16 16" fill="none" stroke="#fff" stroke-width="1.4" stroke-linejoin="round">
    <defs><clipPath id="bgc2"><rect x="1.6" y="1.6" width="12.8" height="12.8" rx="1.6"/></clipPath></defs>
    <g clip-path="url(#bgc2)" stroke="#cfc6d8" stroke-width="1.6"><path d="M-2 10 L10 -2 M0 15 L15 0 M4 17 L17 4 M9 18 L18 9"/></g>
    <rect x="1.6" y="1.6" width="12.8" height="12.8" rx="1.8"/>
  </svg>
</div>


<div id="bottom">
  <svg class="abs" style="left:18px;top:18px" width="24" height="24" viewBox="0 0 24 24" fill="none" stroke="#15171a" stroke-width="1.7" stroke-linecap="round" stroke-linejoin="round">
    <rect x="3" y="7.4" width="13.4" height="13.4" rx="2.4"/>
    <path d="M7.4 4.2 C8 3.4 8.8 3 9.8 3 H17.6 C19.6 3 20.8 4.2 20.8 6.2 V14 C20.8 15 20.4 15.8 19.6 16.4"/>
    <path d="M9.7 11 V17.2 M6.6 14.1 H12.8"/>
  </svg>
  <svg class="abs" style="left:68px;top:18px" width="24" height="24" viewBox="0 0 24 24" fill="none" stroke="#d3d9e0" stroke-width="1.7" stroke-linecap="round" stroke-linejoin="round">
    <path d="M3 8.4 H21"/><path d="M9.4 5.2 C10 4 10.8 3.6 12 3.6 C13.2 3.6 14 4 14.6 5.2"/>
    <path d="M5.6 8.6 L6.6 18.6 C6.8 20 7.6 20.6 8.8 20.6 H15.2 C16.4 20.6 17.2 20 17.4 18.6 L18.4 8.6"/>
  </svg>
  <div class="abs" style="left:110px;top:19px;width:1px;height:20px;background:#dfe2e6"></div>
  <svg class="abs" style="left:130px;top:17px" width="26" height="26" viewBox="0 0 26 26" fill="none" stroke="#15171a" stroke-width="1.8" stroke-linecap="round" stroke-linejoin="round">
    <path d="M12.4 20.4 H5.8 C4.4 20.4 3.6 19.6 3.6 18.2 V5.6 C3.6 4.2 4.4 3.4 5.8 3.4 H18.6 C20 3.4 20.8 4.2 20.8 5.6 V12.6"/>
    <path d="M19.2 16.2 V22.6 M16 19.4 H22.4" stroke-width="1.6"/>
  </svg>
  <div class="t" style="left:162px;top:21.2px;font-size:16.8px;color:#15171a;letter-spacing:0.6px;-webkit-text-stroke:0.4px #15171a">Add page</div>

  <svg class="abs" style="left:1222px;top:19px" width="20" height="20" viewBox="0 0 20 20" fill="none" stroke="#c9d0d8" stroke-width="1.5" stroke-linecap="round" stroke-linejoin="round"><path d="M12.6 3.2 L6.2 10.2 L12.6 17.2"/></svg>
  <div class="t" style="left:1269.4px;top:22.1px;font-size:16px;color:#15171a;letter-spacing:-1.5px;-webkit-text-stroke:0.35px #15171a">1/1</div>
  <svg class="abs" style="left:1314px;top:19px" width="20" height="20" viewBox="0 0 20 20" fill="none" stroke="#c9d0d8" stroke-width="1.5" stroke-linecap="round" stroke-linejoin="round"><path d="M7.4 3.2 L13.8 10.2 L7.4 17.2"/></svg>
  <div class="abs" style="left:1359px;top:19px;width:1px;height:20px;background:#dfe2e6"></div>
  <svg class="abs" style="left:1378px;top:16.6px" width="24" height="24" viewBox="0 0 24 24" fill="none" stroke="#15171a" stroke-width="1.9" stroke-linecap="round" stroke-linejoin="round">
    <rect x="3.4" y="10.6" width="17.2" height="10.4" rx="1.6"/>
    <path d="M9.4 6.2 L12 3.6 L14.6 6.2"/>
  </svg>
</div>

<!-- collapse handle -->
  <svg class="abs" style="left:494px;top:397px;overflow:visible" width="16" height="74" viewBox="0 0 16 74">
    <path d="M1 0 L5 7 V67 L1 74 Z" fill="#000"/>
    <path d="M5 5.6 C9 8.6 12.2 11.6 12.2 17.6 V56.4 C12.2 62.4 9 65.4 5 68.4 Z" fill="#323235"/>
    <path d="M8.4 30.6 L5 37 L8.4 43.4" fill="none" stroke="#6f7276" stroke-width="1.3" stroke-linecap="round" stroke-linejoin="round"/>
  </svg>
<div id="edge"></div>
</body>
</html>
